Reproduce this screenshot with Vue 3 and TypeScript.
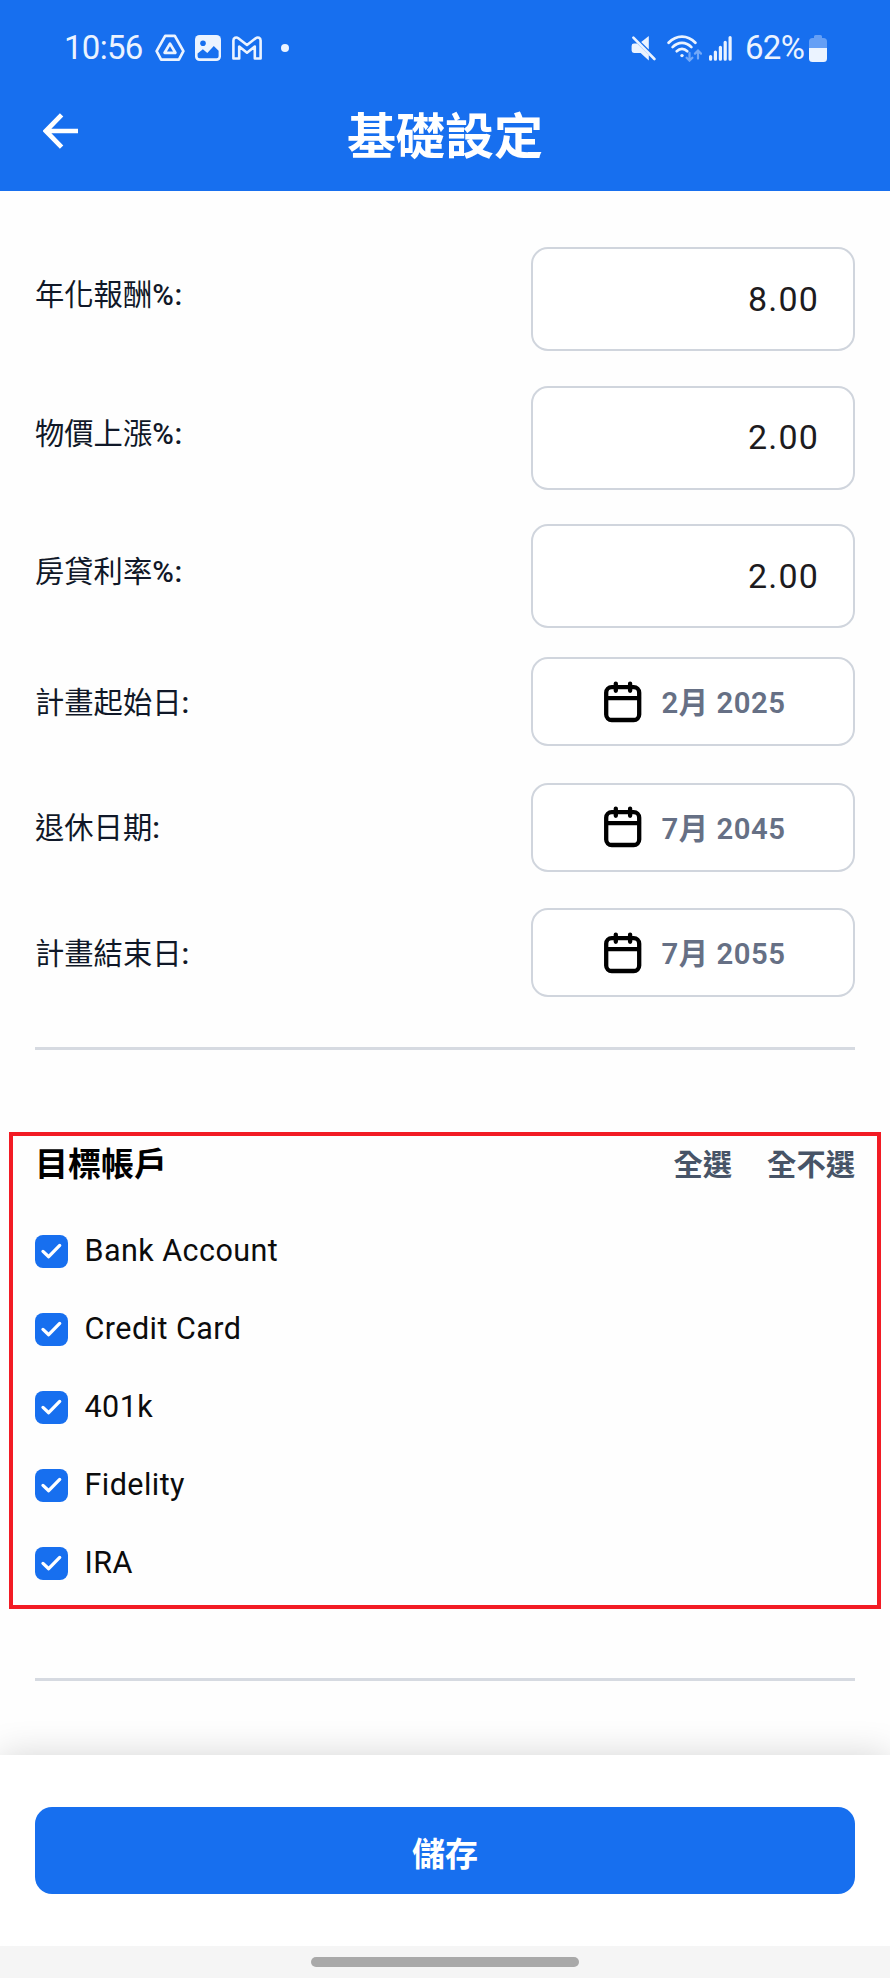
<script setup lang="ts">
import { ref } from 'vue'

interface RateField {
  label: string
  value: string
}
interface DateField {
  label: string
  value: string
}
interface Account {
  name: string
  checked: boolean
}

const rates = ref<RateField[]>([
  { label: '年化報酬', value: '8.00' },
  { label: '物價上漲', value: '2.00' },
  { label: '房貸利率', value: '2.00' },
])

const dates: DateField[] = [
  { label: '計畫起始日', value: '2月 2025' },
  { label: '退休日期', value: '7月 2045' },
  { label: '計畫結束日', value: '7月 2055' },
]

const accounts = ref<Account[]>(
  ['Bank Account', 'Credit Card', '401k', 'Fidelity', 'IRA'].map((name) => ({ name, checked: true })),
)

function setAll(checked: boolean): void {
  accounts.value.forEach((a) => (a.checked = checked))
}
</script>

<template>
  <div class="screen">
    <header class="header">
      <div class="status">
        <span class="status-text time">10:56</span>
        <svg class="ic-drive" width="30" height="28" viewBox="0 0 30 28" fill="none" stroke="#ebf3ff" stroke-linejoin="round">
          <path d="M10.2 1.8h9.6l8.6 15.4-4.5 8.4H6.1l-4.5-8.4z" stroke-width="2.7" />
          <path d="M15 9.6l5.4 9.2H9.6z" stroke-width="2.7" />
        </svg>
        <svg class="ic-photo" width="26" height="26" viewBox="0 0 26 26">
          <rect width="26" height="26" rx="4.6" fill="#ebf3ff" />
          <circle cx="8" cy="8.2" r="2.8" fill="#176fef" />
          <path d="M2.6 18.6l5.3-4.3 4.4 3.8 6.5-7 4.8 4.7v5.4a2 2 0 0 1-2 2H4.6a2 2 0 0 1-2-2z" fill="#176fef" />
        </svg>
        <svg class="ic-mail" width="30" height="24" viewBox="0 0 30 24" fill="none" stroke="#ebf3ff" stroke-width="2.6" stroke-linejoin="round">
          <path d="M1.4 22.5V4.5C1.4 1.8 4.2.6 6.3 2.2L15 9 23.700 2.200c2.100-1.600 4.900-.4 4.900 2.300v18h-5.800V10.600L15 16.700l-7.800-6.100v11.900z" />
        </svg>
        <i class="dot"></i>

        <svg class="ic-mute" width="25" height="26" viewBox="0 0 25 26" fill="#ebf3ff">
          <path d="M17.800 1v13.600L10.200 7z" />
          <path d="M3 8.600h3.200L17.800 20v5.400L9.600 18H3a2.400 2.400 0 0 1-2.400-2.400V11A2.400 2.400 0 0 1 3 8.600z" />
          <path d="M2.400 2.600l21 21.400" stroke="#ebf3ff" stroke-width="2.600" stroke-linecap="round" />
        </svg>
        <svg class="ic-wifi" width="35" height="27" viewBox="0 0 35 27" fill="none" stroke="#ebf3ff" stroke-width="2.700" stroke-linecap="round">
          <path d="M1.600 7.800C9.400-.4 20.600-.4 28.400 7.800" />
          <path d="M5.600 12.100c5.600-5.600 13.200-5.600 18.800 0" />
          <path d="M9.700 16.200c3.200-3 7.400-3 10.600 0" />
          <circle cx="15" cy="20.600" r="1.700" fill="#ebf3ff" stroke="none" />
          <g stroke="#72a8f8" stroke-width="2.200">
            <path d="M22.500 17.800v7.400M19.600 22.700l2.900 2.900 2.900-2.900" />
            <path d="M31 23.600v-7.600M28 18.600l3-3 3 3" />
          </g>
        </svg>
        <svg class="ic-signal" width="23" height="25" viewBox="0 0 23 25" stroke="#ebf3ff" stroke-width="3.200" stroke-linecap="round">
          <path d="M1.600 20.500v2.700M6.400 16v7.200M11.400 11.300v11.900M16.200 6.300v16.900M21.100 1.600v21.600" />
        </svg>
        <span class="status-text percent">62%</span>
        <svg class="ic-battery" width="18" height="27" viewBox="0 0 18 27">
          <path d="M5 3V1.500A1.500 1.500 0 0 1 6.500 0h5A1.500 1.500 0 0 1 13 1.500V3h1.500A3.500 3.500 0 0 1 18 6.500V13H0V6.500A3.500 3.500 0 0 1 3.500 3z" fill="#659ff5" />
          <path d="M0 13h18v10.500a3.500 3.500 0 0 1-3.500 3.500h-11A3.500 3.500 0 0 1 0 23.500z" fill="#ebf3ff" />
        </svg>
      </div>
      <div class="titlebar">
        <svg class="back" width="36" height="36" viewBox="0 0 36 36" fill="none" stroke="#fff" stroke-width="4.700">
          <path d="M35 18H3.500M18.600 1.800L2.800 18l15.800 16.200" />
        </svg>
        <h1>基礎設定</h1>
      </div>
    </header>

    <main class="content">
      <div class="rates">
        <label v-for="f in rates" :key="f.label" class="rate-row">
          <span class="label">{{ f.label }}<b>%:</b></span>
          <input v-model="f.value" class="rate-input" type="text" />
        </label>
      </div>

      <div class="dates">
        <div v-for="d in dates" :key="d.label" class="date-row">
          <span class="label">{{ d.label }}<b>:</b></span>
          <button class="date-btn" type="button">
            <svg width="38" height="42" viewBox="0 0 38 42" fill="none" stroke="#000" stroke-width="4.300" stroke-linecap="round">
              <rect x="2.200" y="6.200" width="33" height="32.800" rx="5.500" />
              <path d="M3 17.100h32M11.800 2.600v7.200M26.100 2.600v7.200" />
            </svg>
            <span>{{ d.value }}</span>
          </button>
        </div>
      </div>

      <hr class="divider" />

      <section class="accounts">
        <div class="accounts-head">
          <h2>目標帳戶</h2>
          <div class="links">
            <button type="button" @click="setAll(true)">全選</button>
            <button type="button" @click="setAll(false)">全不選</button>
          </div>
        </div>
        <ul>
          <li v-for="a in accounts" :key="a.name" @click="a.checked = !a.checked">
            <span class="box" :class="{ on: a.checked }">
              <svg v-if="a.checked" width="33" height="33" viewBox="0 0 33 33" fill="none" stroke="#fff" stroke-width="3.300" stroke-linecap="round" stroke-linejoin="round">
                <path d="M8 16.400l5.700 5.300L24.700 10.400" />
              </svg>
            </span>
            <span class="name">{{ a.name }}</span>
          </li>
        </ul>
      </section>

      <hr class="divider" />
    </main>

    <footer class="footer">
      <button class="save" type="button">儲存</button>
    </footer>
    <div class="navbar"><i></i></div>
  </div>
</template>

<style>
html,
body {
  margin: 0;
  background: #fff;
}
</style>

<style scoped>
.screen {
  width: 890px;
  height: 1978px;
  display: flex;
  flex-direction: column;
  overflow: hidden;
  background: #fefefe;
  font-family: Roboto, 'Noto Sans CJK TC', sans-serif;
}
button {
  border: 0;
  padding: 0;
  background: none;
  font-family: inherit;
}
svg {
  flex: none;
  display: block;
}
.header {
  height: 191px;
  flex: none;
  background: #176fef;
}
.status {
  height: 96px;
  display: flex;
  align-items: center;
  padding: 0 63px 0 64px;
  box-sizing: border-box;
}
.status-text {
  color: #ebf3ff;
  font-size: 33px;
  line-height: 40px;
  letter-spacing: -0.700px;
  white-space: nowrap;
}
.time {
  width: 91px;
}
.ic-photo {
  margin-left: 10px;
}
.ic-mail {
  margin-left: 11px;
}
.dot {
  width: 8px;
  height: 8px;
  margin-left: 19px;
  border-radius: 50%;
  background: #ebf3ff;
}
.ic-mute {
  margin-left: auto;
}
.ic-wifi {
  margin-left: 11px;
}
.ic-signal {
  margin-left: 7px;
}
.percent {
  width: 64px;
  margin-left: 13px;
}
.titlebar {
  position: relative;
  height: 78px;
  display: flex;
  align-items: center;
  justify-content: center;
}
.back {
  position: absolute;
  left: 43px;
  top: 17px;
}
h1 {
  margin: 5px 0 0;
  color: #fff;
  font-size: 49px;
  line-height: 60px;
  font-weight: 700;
}
.content {
  height: 1564px;
  flex: none;
  padding-top: 56.300px;
  box-sizing: border-box;
}
.rates,
.dates {
  padding: 0 35px;
}
.rates {
  display: grid;
  gap: 34.600px;
}
.rate-row,
.date-row {
  display: flex;
  justify-content: space-between;
  align-items: center;
}
.label {
  color: #101828;
  font-size: 29.300px;
  line-height: 40px;
  font-weight: 400;
}
.label b {
  font-weight: 500;
  letter-spacing: 0.700px;
}
.rate-row .label {
  padding-bottom: 8px;
}
.date-row .label {
  padding-top: 2px;
}
.rate-input {
  width: 324px;
  height: 104px;
  box-sizing: border-box;
  border: 2px solid #d0d5dd;
  border-radius: 17px;
  padding: 0 34px 1px;
  background: #fff;
  text-align: right;
  font-family: inherit;
  font-size: 34px;
  letter-spacing: 1.200px;
  color: #1d1b20;
  outline: none;
}
.dates {
  display: grid;
  gap: 36.700px;
  margin-top: 29px;
}
.date-btn {
  width: 324px;
  height: 88.700px;
  box-sizing: border-box;
  border: 2px solid #d0d5dd;
  border-radius: 17px;
  display: flex;
  align-items: center;
  justify-content: center;
  gap: 20px;
  padding: 0 0 0 3px;
  background: #fff;
  color: #667085;
  font-size: 29.300px;
  line-height: 40px;
  font-weight: 600;
  letter-spacing: 0.500px;
}
.date-btn span {
  padding-top: 3px;
}
.divider {
  height: 3px;
  border: 0;
  margin: 50px 35px 0;
  background: #d6dae1;
}
.accounts {
  height: 477px;
  margin: 82px 9px 0;
  padding: 0 22px;
  box-sizing: border-box;
  border: 4px solid #f21b24;
}
.accounts-head {
  display: flex;
  justify-content: space-between;
  align-items: center;
  height: 58px;
}
h2 {
  margin: 0;
  font-size: 33px;
  line-height: 44px;
  font-weight: 700;
  color: #000;
}
.links {
  display: flex;
  gap: 35px;
}
.links button {
  color: #475467;
  font-size: 29.300px;
  line-height: 40px;
  font-weight: 600;
}
ul {
  list-style: none;
  margin: 18.500px 0 0 -0.500px;
  padding: 0;
}
li {
  height: 78px;
  display: flex;
  align-items: center;
  gap: 17px;
}
.box {
  width: 33px;
  height: 33px;
  box-sizing: border-box;
  border-radius: 8px;
  border: 2px solid #d0d5dd;
}
.box.on {
  border: 0;
  background: #176fef;
}
.name {
  font-size: 30.500px;
  line-height: 40px;
  letter-spacing: 0.450px;
  color: #0c0c0c;
}
.accounts + .divider {
  margin-top: 69px;
}
.footer {
  height: 191px;
  flex: none;
  padding: 52px 35px 0;
  box-sizing: border-box;
  background: #fff;
  box-shadow: 0 0 34px rgba(0, 0, 0, 0.16);
}
.save {
  display: block;
  width: 100%;
  height: 87px;
  border-radius: 17px;
  padding-top: 8px;
  background: #176fef;
  color: #fff;
  font-size: 33px;
  line-height: 79px;
  font-weight: 700;
}
.navbar {
  flex: 1;
  display: flex;
  justify-content: center;
  padding-top: 11px;
  background: #f5f5f5;
}
.navbar i {
  width: 268px;
  height: 10px;
  border-radius: 5px;
  background: #a9a9a9;
}
</style>
